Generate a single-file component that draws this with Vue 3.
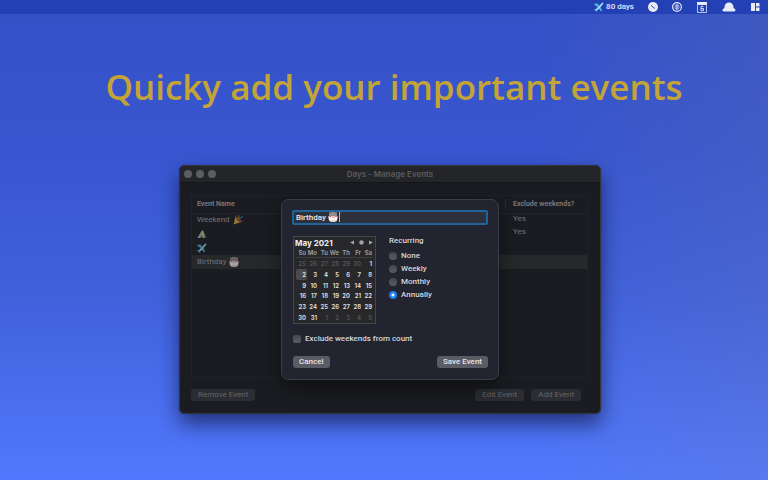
<script setup>
import { ref } from 'vue'

const eventName = ref('Birthday')
const recurrence = ref('Annually')
const excludeWeekends = ref(false)

const recurrences = ['None', 'Weekly', 'Monthly', 'Annually']
const weekdays = ['Su', 'Mo', 'Tu', 'We', 'Th', 'Fr', 'Sa']

const events = [
  { name: 'Weekend', icon: 'party', exclude: 'Yes' },
  { name: '', icon: 'tent', exclude: 'Yes' },
  { name: '', icon: 'plane', exclude: '' },
  { name: 'Birthday', icon: 'cake', exclude: '', selected: true },
]

// May 2021 starts on a Saturday, so six days of April lead the grid.
const weeks = Array.from({ length: 6 }, (_, w) =>
  Array.from({ length: 7 }, (_, d) => {
    const n = w * 7 + d - 5
    if (n < 1) return { day: n + 30, outside: true }
    if (n > 31) return { day: n - 31, outside: true }
    return { day: n, outside: false }
  })
)
</script>

<template>
  <div class="desktop">
    <svg class="defs" aria-hidden="true">
      <symbol id="plane" viewBox="0 0 20 20">
        <path d="M1 3l6 0 4 4 4-5c2-2 4-2 4 0 0 1-1 2-2 3L13 9l3 8-2 2-5-6-3 4v2l-2 1-1-3-3-1 1-2h3l3-4L1 6z" fill="#49b0e0" />
        <path d="M4 16L15 4l3-2-1 3L6 17z" fill="#e6eef3" />
      </symbol>
      <symbol id="party" viewBox="0 0 20 20">
        <path d="M1 19L5 3l11 11z" fill="#f0b545" />
        <path d="M3 13l4 4" stroke="#b06c2c" stroke-width="1.500" />
        <ellipse cx="11" cy="9" rx="2.500" ry="6.500" transform="rotate(-45 11 9)" fill="#8a4c28" />
        <path d="M10 8c3-2 1-4 2-7" fill="none" stroke="#e5b93f" stroke-width="2" />
        <path d="M13 9c1-4 4-2 6-7" fill="none" stroke="#5aa5e0" stroke-width="2" />
        <path d="M14 13c2-2 3 1 5-1" fill="none" stroke="#e0635a" stroke-width="2" />
        <circle cx="6" cy="2" r="1.500" fill="#d8574f" />
      </symbol>
      <symbol id="tent" viewBox="0 0 20 20">
        <path d="M1 18L9 4l3-1 7 13-4 2z" fill="#5f8c6a" />
        <path d="M9 4l3-1 3 15H9z" fill="#e4d99a" />
        <path d="M1 18L9 4l-1 14z" fill="#9fc4c5" />
        <path d="M6 18l4-6 2 6z" fill="#54624a" />
      </symbol>
      <symbol id="cake" viewBox="0 0 20 20">
        <path d="M4 11V1M8 11V0M12 11V0M16 11V1" stroke="#fbe6d8" stroke-width="2" />
        <path d="M1 8h18v3c0 3-1 5-2 7-2 2-12 2-14 0-1-2-2-4-2-7z" fill="#faf5f2" />
        <path d="M3 9h3M7 10h2.500M11 10h2.500M14.500 9h3" stroke="#c9545a" stroke-width="2" />
        <path d="M3 15c4 2 10 2 14 0v3c-2 2-12 2-14 0z" fill="#ead9d0" />
      </symbol>
    </svg>

    <header class="menubar">
      <span class="status"><svg class="emoji"><use href="#plane" /></svg>80 days</span>
      <svg width="10" height="10" viewBox="0 0 10 10">
        <circle cx="5" cy="5" r="5" fill="#e8ecf8" />
        <path d="M3.500 3.500L5 5.300l1.500.9" fill="none" stroke="#2b46b2" stroke-linecap="round" />
      </svg>
      <svg width="10" height="10" viewBox="0 0 10 10">
        <circle cx="5" cy="5" r="4.400" fill="none" stroke="#e3e8f8" stroke-width="1.200" />
        <ellipse cx="5" cy="5" rx="2" ry="2.500" fill="none" stroke="#c3cdf0" stroke-width=".8" />
        <path d="M5 3v4" stroke="#f2f4fc" stroke-width="1.200" />
      </svg>
      <svg width="12" height="11" viewBox="0 0 12 11">
        <path d="M1 0h10v3H1z" fill="#e8ecf8" />
        <path d="M1.500 2v8.500h9V2" fill="none" stroke="#b9c4ec" />
        <path d="M7.500 4.500H5v4.200h2.500V6.500H5" fill="none" stroke="#e8ecf8" stroke-width=".9" />
      </svg>
      <svg width="14" height="10" viewBox="0 0 14 10">
        <path d="M2.500 6V5c0-2.500 2-4.500 4.500-4.500S11.500 2.500 11.500 5v1c1.200.5 2 1.200 2 2 0 1.200-1 1.500-2.500 1.500H3C1.500 9.500.5 9.200.5 8c0-.8.800-1.500 2-2z" fill="#e8ecf8" />
      </svg>
      <svg width="10" height="10" viewBox="0 0 10 10">
        <path d="M1 1h4v8H1zM6 1h3.500v3.500H6zM6 5.500h3.500V9H6z" fill="#e8ecf8" />
      </svg>
    </header>

    <h1>Quicky add your important events</h1>

    <main class="window">
      <div class="titlebar">
        <span class="lights"><i></i><i></i><i></i></span>
        <h2>Days - Manage Events</h2>
      </div>

      <div class="body">
        <div class="list">
          <table>
            <thead>
              <tr><th>Event Name</th><th class="flag"><span>Exclude weekends?</span></th></tr>
            </thead>
            <tbody>
              <tr v-for="(e, i) in events" :key="i" :class="{ selected: e.selected }">
                <td><span class="name">{{ e.name }}<svg class="emoji"><use :href="'#' + e.icon" /></svg></span></td>
                <td class="flag">{{ e.exclude }}</td>
              </tr>
            </tbody>
          </table>
        </div>
        <div class="actions">
          <button type="button">Remove Event</button>
          <span class="group">
            <button type="button">Edit Event</button>
            <button type="button">Add Event</button>
          </span>
        </div>
      </div>

      <form class="sheet" @submit.prevent>
        <div class="field">
          <input v-model="eventName" type="text" aria-label="Event name" />
          <span class="suffix"><svg class="emoji"><use href="#cake" /></svg><i class="caret"></i></span>
        </div>

        <div class="columns">
          <section class="calendar">
            <div class="month">
              <strong>May 2021</strong>
              <span class="nav">
                <button type="button" aria-label="Previous month"><svg viewBox="0 0 5 5"><path d="M4 .5v4L0 2.500z" /></svg></button>
                <button type="button" aria-label="Today"><svg viewBox="0 0 5 5"><circle cx="2.500" cy="2.500" r="2.200" /></svg></button>
                <button type="button" aria-label="Next month"><svg viewBox="0 0 5 5"><path d="M1 .5v4l4-2z" /></svg></button>
              </span>
            </div>
            <table>
              <thead>
                <tr><th v-for="d in weekdays" :key="d">{{ d }}</th></tr>
              </thead>
              <tbody>
                <tr v-for="(week, w) in weeks" :key="w">
                  <td v-for="(c, d) in week" :key="d" :class="{ outside: c.outside, today: !c.outside && c.day === 2 }">{{ c.day }}</td>
                </tr>
              </tbody>
            </table>
          </section>

          <fieldset>
            <legend>Recurring</legend>
            <label v-for="r in recurrences" :key="r">
              <input v-model="recurrence" type="radio" name="recurrence" :value="r" />{{ r }}
            </label>
          </fieldset>
        </div>

        <label class="check"><input v-model="excludeWeekends" type="checkbox" />Exclude weekends from count</label>

        <div class="buttons">
          <button type="button">Cancel</button>
          <button type="submit">Save Event</button>
        </div>
      </form>
    </main>
  </div>
</template>

<style>
body {
  margin: 0;
}
</style>

<style scoped>
* {
  box-sizing: border-box;
}
.desktop {
  min-height: 100vh;
  display: flex;
  flex-direction: column;
  overflow: hidden;
  background:
    linear-gradient(90deg, transparent 70%, rgba(125, 130, 150, 0.14)),
    linear-gradient(180deg, #3451c6 0%, #3856cf 32%, #4061dc 62%, #5178fc 100%);
  font-family: Roboto, Inter, sans-serif;
  font-size: 8px;
  line-height: 12px;
}
.defs {
  position: absolute;
  width: 0;
  height: 0;
}
.emoji {
  width: 10px;
  height: 10px;
  flex: none;
}
.menubar {
  height: 14px;
  padding: 0 8px;
  display: flex;
  align-items: center;
  justify-content: flex-end;
  gap: 14px;
  background: #2340b4;
  color: #e4e9fa;
  font-weight: 500;
}
.status {
  display: flex;
  align-items: center;
  gap: 2px;
}
h1 {
  margin: 46px 0 0;
  padding-left: 20px;
  text-align: center;
  font: 600 35px/54px "Open Sans", "Noto Sans", sans-serif;
  color: #c4a436;
}
.window {
  position: relative;
  width: calc(100% - 32px);
  max-width: 422px;
  margin: 51px auto 60px;
  left: 6px;
  border: 1px solid #36373c;
  border-radius: 6px;
  background: #1b1c21;
  box-shadow: 0 0 1px #101116, 0 10px 20px rgba(10, 14, 50, 0.6);
}
.titlebar {
  height: 17px;
  padding: 0 4px;
  display: grid;
  grid-template-columns: 1fr auto 1fr;
  align-items: center;
  border-bottom: 1px solid #15161a;
  border-radius: 5px 5px 0 0;
  background: #242529;
}
.lights {
  display: flex;
  gap: 4px;
}
.lights i {
  width: 8px;
  height: 8px;
  border-radius: 50%;
  background: #5c5d63;
}
h2 {
  margin: 0;
  font: 600 8px/12px Inter, sans-serif;
  color: #5b5c60;
}
.body {
  padding: 12px 12px 12px 11px;
}
.list {
  min-height: 183px;
  border: 1px solid #212227;
}
.list table {
  width: 100%;
  border-collapse: collapse;
  table-layout: fixed;
  color: #727377;
}
.list th {
  height: 17px;
  padding: 0 5px;
  text-align: left;
  font-size: 7px;
  font-weight: 600;
  color: #7c7d81;
  border-bottom: 1px solid #25262b;
}
.list th.flag {
  padding-left: 0;
}
.list th span {
  display: block;
  padding-left: 7px;
  line-height: 10px;
  border-left: 1px solid #2b2c31;
}
.list td {
  height: 14px;
  padding: 0 5px;
}
.list .flag {
  width: 82px;
}
.list td.flag {
  padding-left: 8px;
  line-height: 10px;
  vertical-align: top;
}
.name {
  display: flex;
  align-items: center;
  gap: 3px;
}
.name .emoji {
  opacity: 0.6;
}
.selected {
  background: #27282a;
}
.actions {
  margin-top: 11px;
  padding-right: 7px;
  display: flex;
  justify-content: space-between;
}
.group {
  display: flex;
  gap: 7px;
}
button {
  font: inherit;
  border: 0;
}
.actions button {
  height: 12px;
  padding: 0 7px;
  border-radius: 3px;
  background: #2b2d32;
  color: #65666a;
}
.sheet {
  position: absolute;
  top: 33px;
  left: 50%;
  width: 218px;
  margin-left: -109px;
  padding: 10px 10px 11px;
  border: 1px solid #3c3d46;
  border-radius: 7px;
  background: #222430;
  box-shadow: 0 0 1px #08090c, 0 8px 22px rgba(0, 0, 0, 0.45);
  color: #d6d7db;
  font-weight: 500;
}
.field {
  position: relative;
}
.field input {
  display: block;
  width: 100%;
  height: 15px;
  padding: 0 2px;
  border: 2px solid #1f659b;
  border-radius: 2px;
  outline: 0;
  background: #2e303c;
  color: #eeeff2;
  font: inherit;
}
.suffix {
  position: absolute;
  left: 36px;
  top: 2px;
  display: flex;
  gap: 1px;
}
.caret {
  width: 1px;
  height: 10px;
  background: #b9bac0;
}
.columns {
  margin: 11px 0 0 1px;
  display: flex;
  gap: 13px;
}
.calendar {
  width: 83px;
  border: 1px solid #45464a;
  background: #28282a;
  font-family: Inter, sans-serif;
}
.month {
  height: 11px;
  padding: 0 2px 0 1px;
  display: flex;
  align-items: center;
  justify-content: space-between;
}
.month strong {
  font-weight: 700;
  color: #f0f0f0;
}
.nav {
  display: flex;
  gap: 4px;
}
.nav button {
  width: 5px;
  height: 5px;
  padding: 0;
  display: flex;
  background: none;
}
.nav svg {
  width: 5px;
  height: 5px;
  fill: #a4a4a6;
}
.calendar table {
  width: 77px;
  height: 75px;
  margin-left: 2px;
  border-collapse: collapse;
  table-layout: fixed;
  font-size: 6px;
  line-height: 9px;
}
.calendar th,
.calendar td {
  padding: 0 1px 0 0;
  text-align: right;
  white-space: nowrap;
  font-weight: 600;
}
.calendar th {
  color: #a0a0a3;
  border-bottom: 1px solid #3e3e41;
}
.calendar td {
  color: #e2e2e3;
}
.calendar td.outside {
  color: #555558;
}
.calendar td.today {
  background: #4b4b4d;
  border-radius: 2px;
}
fieldset {
  margin: 0;
  padding: 0;
  border: 0;
  min-width: 0;
}
legend {
  padding: 0;
  margin-bottom: 3px;
  line-height: 10px;
}
label {
  display: flex;
  align-items: center;
  gap: 4px;
}
fieldset label {
  height: 13px;
}
input[type="radio"],
input[type="checkbox"] {
  appearance: none;
  margin: 0;
  width: 8px;
  height: 8px;
  background: linear-gradient(#45474f, #5a5c64);
}
input[type="radio"] {
  border-radius: 50%;
}
input[type="radio"]:checked {
  background: radial-gradient(circle, #fff 1px, #1b7df0 2px);
}
input[type="checkbox"] {
  border-radius: 2px;
}
.check {
  margin: 9px 0 0 1px;
}
.buttons {
  margin: 11px 0 0 1px;
  display: flex;
  justify-content: space-between;
}
.buttons button {
  height: 12px;
  padding: 0 6px;
  border-radius: 3px;
  background: #595b65;
  color: #e6e7ea;
}
</style>
